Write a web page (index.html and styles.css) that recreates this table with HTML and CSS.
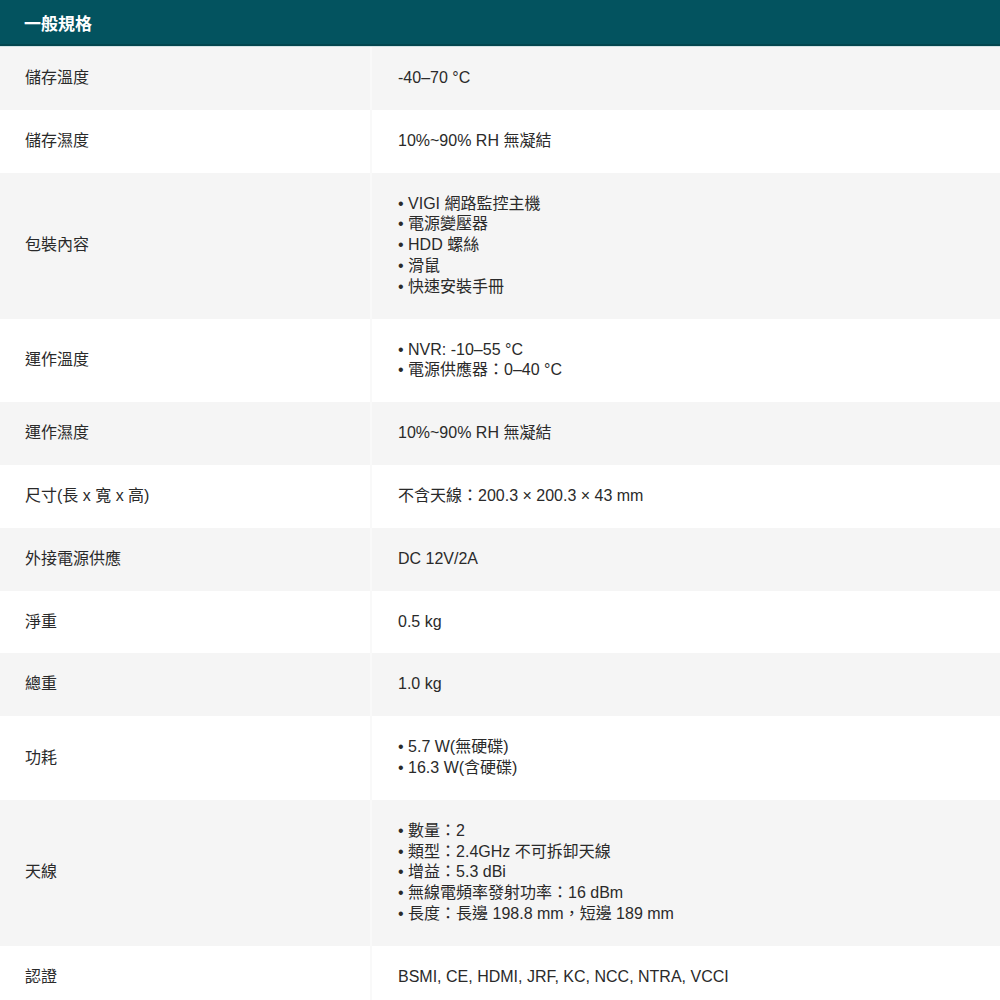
FILE: index.html
```html
<!DOCTYPE html>
<html lang="zh-Hant">
<head>
<meta charset="utf-8">
<title>一般規格</title>
<link rel="stylesheet" href="styles.css">
</head>
<body>
<div class="spec">
  <div class="spec-head">一般規格</div>
  <div class="row">
    <div class="label">儲存溫度</div>
    <div class="value">-40–70 °C</div>
  </div>
  <div class="row">
    <div class="label">儲存濕度</div>
    <div class="value">10%~90% RH 無凝結</div>
  </div>
  <div class="row">
    <div class="label">包裝內容</div>
    <div class="value">
      <div>• VIGI 網路監控主機</div>
      <div>• 電源變壓器</div>
      <div>• HDD 螺絲</div>
      <div>• 滑鼠</div>
      <div>• 快速安裝手冊</div>
    </div>
  </div>
  <div class="row">
    <div class="label">運作溫度</div>
    <div class="value">
      <div>• NVR: -10–55 °C</div>
      <div>• 電源供應器：0–40 °C</div>
    </div>
  </div>
  <div class="row">
    <div class="label">運作濕度</div>
    <div class="value">10%~90% RH 無凝結</div>
  </div>
  <div class="row">
    <div class="label">尺寸(長 x 寬 x 高)</div>
    <div class="value">不含天線：200.3 × 200.3 × 43 mm</div>
  </div>
  <div class="row">
    <div class="label">外接電源供應</div>
    <div class="value">DC 12V/2A</div>
  </div>
  <div class="row">
    <div class="label">淨重</div>
    <div class="value">0.5 kg</div>
  </div>
  <div class="row">
    <div class="label">總重</div>
    <div class="value">1.0 kg</div>
  </div>
  <div class="row">
    <div class="label">功耗</div>
    <div class="value">
      <div>• 5.7 W(無硬碟)</div>
      <div>• 16.3 W(含硬碟)</div>
    </div>
  </div>
  <div class="row">
    <div class="label">天線</div>
    <div class="value">
      <div>• 數量：2</div>
      <div>• 類型：2.4GHz 不可拆卸天線</div>
      <div>• 增益：5.3 dBi</div>
      <div>• 無線電頻率發射功率：16 dBm</div>
      <div>• 長度：長邊 198.8 mm，短邊 189 mm</div>
    </div>
  </div>
  <div class="row">
    <div class="label">認證</div>
    <div class="value">BSMI, CE, HDMI, JRF, KC, NCC, NTRA, VCCI</div>
  </div>
</div>
</body>
</html>
```

FILE: styles.css
```css
html, body {
  margin: 0;
  padding: 0;
  background: #ffffff;
}

body {
  font-family: "Liberation Sans", Arial, "Noto Sans CJK TC", sans-serif;
  font-size: 16px;
  color: #2a2a2a;
}

.spec {
  width: 1000px;
}

.spec-head {
  height: 46px;
  box-sizing: border-box;
  padding-left: 24px;
  padding-top: 1px;
  display: flex;
  align-items: center;
  background: #03535f;
  color: #ffffff;
  font-size: 17px;
  font-weight: bold;
  border-bottom: 2px solid #03464f;
  box-shadow: 0 1px 0 #d3e3e5;
  margin-bottom: 1px;
}

.row {
  display: grid;
  grid-template-columns: 370px 1fr;
  line-height: 20.8px;
}

.row:nth-child(even) {
  background: #f5f5f5;
}

.label {
  display: flex;
  align-items: center;
  padding: 21px 0 21px 25px;
}

.value {
  padding: 21px 0 21px 26px;
  border-left: 2px solid #f9f9f9;
}
```
